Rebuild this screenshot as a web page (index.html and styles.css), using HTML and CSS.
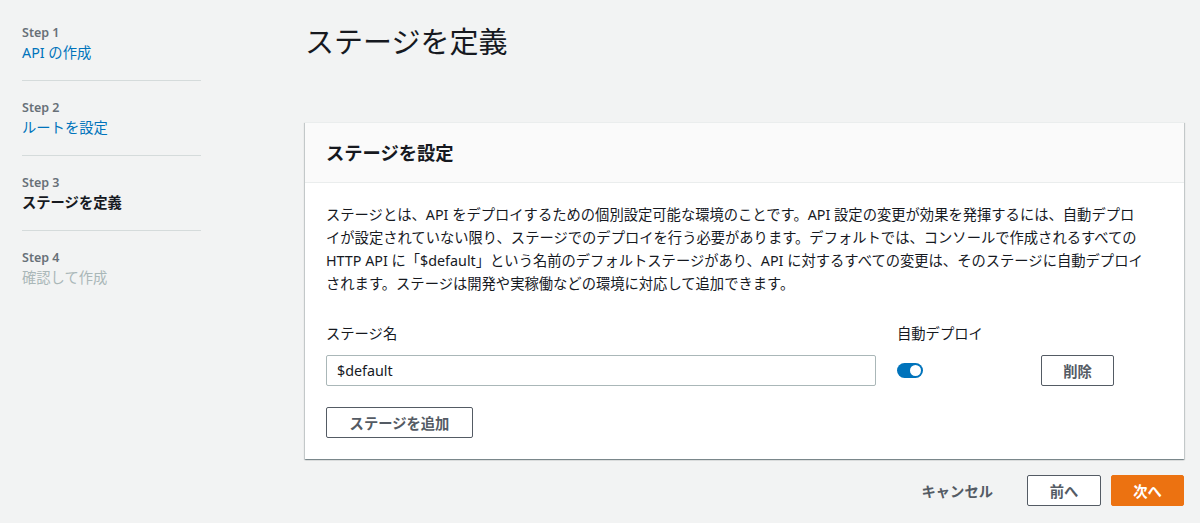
FILE: index.html
```html
<!DOCTYPE html>
<html lang="ja">
<head>
<meta charset="utf-8">
<link rel="stylesheet" href="styles.css">
</head>
<body>
<div class="layout">
  <nav class="steps">
    <div class="step">
      <div class="step-num">Step 1</div>
      <a class="step-link">API の作成</a>
    </div>
    <div class="step">
      <div class="step-num">Step 2</div>
      <a class="step-link">ルートを設定</a>
    </div>
    <div class="step">
      <div class="step-num">Step 3</div>
      <div class="step-current">ステージを定義</div>
    </div>
    <div class="step step-last">
      <div class="step-num">Step 4</div>
      <div class="step-disabled">確認して作成</div>
    </div>
  </nav>
  <main class="main">
    <h1 class="page-title">ステージを定義</h1>
    <section class="card">
      <header class="card-header">
        <h2 class="card-title">ステージを設定</h2>
      </header>
      <div class="card-body">
        <p class="desc">ステージとは、API をデプロイするための個別設定可能な環境のことです。API 設定の変更が効果を発揮するには、自動デプロイが設定されていない限り、ステージでのデプロイを行う必要があります。デフォルトでは、コンソールで作成されるすべての HTTP API に「$default」という名前のデフォルトステージがあり、API に対するすべての変更は、そのステージに自動デプロイされます。ステージは開発や実稼働などの環境に対応して追加できます。</p>
        <div class="stage-row">
          <label class="field-label">ステージ名</label>
          <label class="field-label">自動デプロイ</label>
          <span></span>
          <div class="input">$default</div>
          <div class="toggle-cell"><span class="toggle"><span class="knob"></span></span></div>
          <button class="btn">削除</button>
        </div>
        <button class="btn btn-add">ステージを追加</button>
      </div>
    </section>
    <div class="footer">
      <button class="btn-link">キャンセル</button>
      <button class="btn btn-prev">前へ</button>
      <button class="btn btn-primary">次へ</button>
    </div>
  </main>
</div>
</body>
</html>
```

FILE: styles.css
```css
* { box-sizing: border-box; }
html, body {
  margin: 0;
  padding: 0;
  background: #f2f3f3;
  color: #16191f;
  font-family: "Noto Sans", "Noto Sans CJK JP", sans-serif;
}
.layout {
  display: grid;
  grid-template-columns: 305px 879px;
  height: 523px;
}
.steps {
  padding: 6px 0 0 22px;
  width: 201px;
}
.step {
  padding: 17px 0;
  border-bottom: 1px solid #d5dbdb;
}
.step-last { border-bottom: none; }
.step-num {
  font-size: 12.5px;
  line-height: 20px;
  color: #687078;
  font-weight: 600;
}
.step-link {
  display: block;
  font-size: 14.3px;
  line-height: 20px;
  color: #0073bb;
}
.step-current {
  font-size: 14.3px;
  line-height: 20px;
  font-weight: 700;
}
.step-disabled {
  font-size: 14.3px;
  line-height: 20px;
  color: #aab7b8;
}
.main {
  padding-top: 20px;
}
.page-title {
  margin: 0 0 58px 0;
  font-size: 29px;
  line-height: 44px;
  font-weight: 400;
}
.card {
  background: #fff;
  border-top: 1px solid #eaeded;
  box-shadow: 0 1px 1px 0 rgba(0,28,36,.3), 1px 1px 1px 0 rgba(0,28,36,.15), -1px 1px 1px 0 rgba(0,28,36,.15);
}
.card-header {
  background: #fafafa;
  border-bottom: 1px solid #eaeded;
  height: 60px;
  padding: 19px 21px 0;
}
.card-title {
  margin: 0;
  font-size: 18.3px;
  line-height: 22px;
  font-weight: 700;
}
.card-body {
  padding: 20px 21px 21px;
}
.desc {
  margin: 0;
  width: 822px;
  font-size: 14.3px;
  line-height: 23px;
}
.stage-row {
  margin-top: 28px;
  display: grid;
  grid-template-columns: 550px 123px auto;
  column-gap: 21px;
  row-gap: 10px;
  align-items: center;
}
.field-label {
  font-size: 14.3px;
  line-height: 22px;
}
.input {
  height: 31px;
  border: 1px solid #aab7b8;
  border-radius: 2px;
  padding: 0 10px;
  font-size: 14.3px;
  line-height: 29px;
}
.toggle-cell { display: flex; align-items: center; }
.toggle {
  display: inline-flex;
  align-items: center;
  justify-content: flex-end;
  width: 26px;
  height: 15px;
  border-radius: 8px;
  background: #0073bb;
  padding: 0 2px;
}
.knob {
  width: 11px;
  height: 11px;
  border-radius: 50%;
  background: #fff;
}
.btn {
  height: 31px;
  background: #fff;
  border: 1px solid #545b64;
  border-radius: 2px;
  color: #545b64;
  font-family: inherit;
  font-size: 14.3px;
  font-weight: 700;
  padding: 0 20px;
  cursor: pointer;
}
.stage-row .btn { width: 73px; padding: 0; }
.btn-add {
  margin-top: 21px;
  width: 147px;
  padding: 0;
}
.footer {
  margin-top: 16px;
  display: flex;
  justify-content: flex-end;
  align-items: center;
  gap: 10px;
}
.btn-link {
  height: 31px;
  background: transparent;
  border: none;
  color: #545b64;
  font-family: inherit;
  font-size: 14.3px;
  font-weight: 700;
  padding: 0 24px;
}
.btn-prev { width: 74px; padding: 0; }
.btn-primary {
  width: 73px;
  padding: 0;
  background: #ec7211;
  border-color: #ec7211;
  color: #fff;
}
```
